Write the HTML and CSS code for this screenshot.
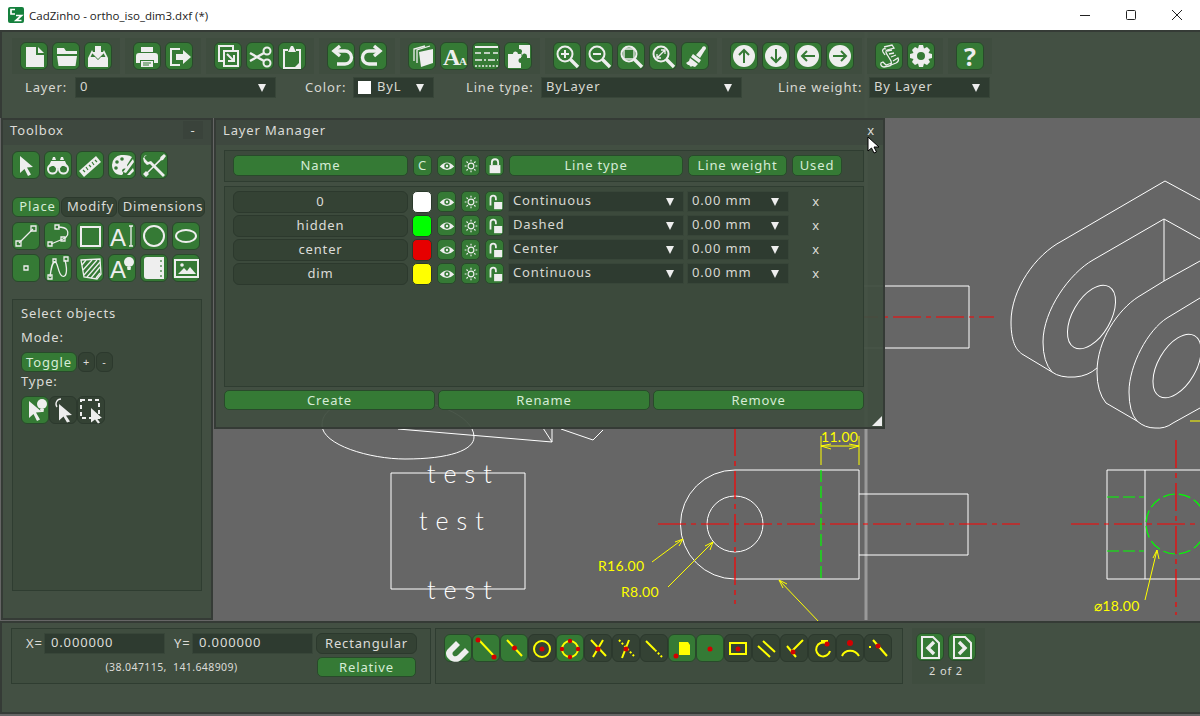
FILE: index.html
```html
<!DOCTYPE html>
<html lang="en">
<head>
<meta charset="utf-8">
<title>CadZinho - ortho_iso_dim3.dxf (*)</title>
<link rel="stylesheet" href="styles.css">
</head>
<body>
<svg class="defs" aria-hidden="true">
  <defs>
    <symbol id="i-new" viewBox="0 0 28 28"><path d="M6 5h10v8h8v12H6z"/><path d="M18 5l6 6h-6z"/></symbol>
    <symbol id="i-open" viewBox="0 0 28 28"><path d="M5 6h7l2 3h11v3H5z"/><path d="M5 14h20l-1.500 10h-17z"/></symbol>
    <symbol id="i-save" viewBox="0 0 28 28"><path d="M11 4h6v6h4l-7 7-7-7h4z"/><path d="M8 8l-4 8v9h20v-9l-4-8-1 2 2.500 5H17l-3 3-3-3H6.500L9 10z"/></symbol>
    <symbol id="i-print" viewBox="0 0 28 28"><path d="M8 5h12v5H8z"/><path d="M6 11h16a3 3 0 0 1 3 3v7h-4v-3H7v3H3v-7a3 3 0 0 1 3-3z"/><path d="M8 19h12v6H8z"/><path d="M10 21h8M10 23h6" class="gs1"/></symbol>
    <symbol id="i-export" viewBox="0 0 28 28"><path d="M15 7H6v16h9" class="ws"/><path d="M11 12h7V8l8 7-8 7v-4h-7z"/></symbol>
    <symbol id="i-copy" viewBox="0 0 28 28"><path d="M19 9V4H5v15h5" class="ws"/><path d="M10 9h14v15H10z" class="ws"/><path d="M13 12l7 7M14 19h6v-6" class="ws"/></symbol>
    <symbol id="i-cut" viewBox="0 0 28 28"><circle cx="21" cy="9" r="3.500" class="ws"/><circle cx="21" cy="21" r="3.500" class="ws"/><path d="M18 11L4 19M18 19L4 11" class="wt2"/></symbol>
    <symbol id="i-paste" viewBox="0 0 28 28"><path d="M10 8H6v18h16V8h-4" class="ws"/><path d="M11 8l2-4h2l2 4 1 2h-8z"/><path d="M22 20v6h-6z"/></symbol>
    <symbol id="i-undo" viewBox="0 0 28 28"><path d="M8 9h10a6.500 6.500 0 0 1 0 13H10" class="wt"/><path d="M13 4L7 9l6 5" class="wt"/></symbol>
    <symbol id="i-redo" viewBox="0 0 28 28"><path d="M20 9H10a6.500 6.500 0 0 0 0 13h8" class="wt"/><path d="M15 4l6 5-6 5" class="wt"/></symbol>
    <symbol id="i-layers" viewBox="0 0 28 28"><path d="M11 10l14-3v14l-12 4z"/><path d="M9 21V8l13-4M6 19V7l11-3" class="ws1"/></symbol>
    <symbol id="i-blocks" viewBox="0 0 28 28"><path d="M4 12h5a2.500 2.500 0 0 1 5 0h3v4a2.500 2.500 0 0 0 0 5v5H4z"/><path d="M15 3h11v13h-3v-2a2.500 2.500 0 0 0-5 0v1h-0.500v-4a2.500 2.500 0 0 0-2.500-4z"/></symbol>
    <symbol id="i-ltypes" viewBox="0 0 28 28"><path d="M3 5h23" class="ws"/><path d="M3 11h23" class="ws d1"/><path d="M3 18h23" class="ws d2"/><path d="M3 24h23" class="ws d3"/></symbol>
    <symbol id="i-zoomin" viewBox="0 0 28 28"><circle cx="12" cy="12" r="7.500" class="ws"/><path d="M17.500 17.500L25 25" class="wt"/><path d="M8 12h8M12 8v8" class="ws"/></symbol>
    <symbol id="i-zoomout" viewBox="0 0 28 28"><circle cx="12" cy="12" r="7.500" class="ws"/><path d="M17.500 17.500L25 25" class="wt"/><path d="M8 12h8" class="ws"/></symbol>
    <symbol id="i-zoomwin" viewBox="0 0 28 28"><circle cx="12" cy="12" r="7.500" class="ws"/><path d="M17.500 17.500L25 25" class="wt"/><path d="M7 7h10v10H7z" class="ws1"/></symbol>
    <symbol id="i-zoomall" viewBox="0 0 28 28"><circle cx="12" cy="12" r="7.500" class="ws"/><path d="M17.500 17.500L25 25" class="wt"/><path d="M8 16l8-8M8 12v4h4M12 8h4v4" class="ws1"/></symbol>
    <symbol id="i-brush" viewBox="0 0 28 28"><path d="M15 13l6-7a2 2 0 1 1 3 2l-5 8z"/><path d="M12 12l8 6-2 3-8-6z"/><path d="M9 16l8 6-3 3-3-1-1 1-2-2-1 0-2-2 3-2z"/></symbol>
    <symbol id="i-up" viewBox="0 0 28 28"><circle cx="14" cy="14" r="11"/><path d="M14 21V8M9 13l5-5 5 5" class="gs"/></symbol>
    <symbol id="i-down" viewBox="0 0 28 28"><circle cx="14" cy="14" r="11"/><path d="M14 7v13M9 15l5 5 5-5" class="gs"/></symbol>
    <symbol id="i-left" viewBox="0 0 28 28"><circle cx="14" cy="14" r="11"/><path d="M21 14H8M13 9l-5 5 5 5" class="gs"/></symbol>
    <symbol id="i-right" viewBox="0 0 28 28"><circle cx="14" cy="14" r="11"/><path d="M7 14h13M15 9l5 5-5 5" class="gs"/></symbol>
    <symbol id="i-script" viewBox="0 0 28 28"><path d="M9 5l8-2 2 3-7 2c-2 1-1 3 1 6l3 5c1 3 0 5-2 5l-5 1c-2 0-4-2-3-4l2-1 3 3 6-2" class="ws1"/><path d="M11 7c-3-1-4 1-3 3l2 3M12 9l5-1M14 12l5-1M16 15l5-2M18 19l5-3c1 2 0 4-2 5l-5 2" class="ws1"/></symbol>
    <symbol id="i-gear" viewBox="0 0 28 28"><path d="M12 3h4l1 3.500 3-1.500 3 3-1.500 3 3.500 1v4l-3.500 1 1.500 3-3 3-3-1.500-1 3.500h-4l-1-3.500-3 1.500-3-3 1.500-3L3 16v-4l3.500-1L5 8l3-3 3 1.500zM14 10a4 4 0 1 0 0 8 4 4 0 0 0 0-8z" fill-rule="evenodd"/></symbol>
    <symbol id="i-pick" viewBox="0 0 28 28"><path d="M8 5l13 11-6 .500 4 7-3 1.500-3.500-7-4.500 4z"/></symbol>
    <symbol id="i-bino" viewBox="0 0 28 28"><circle cx="8.500" cy="18" r="4.500" class="ws"/><circle cx="19.500" cy="18" r="4.500" class="ws"/><path d="M4 17l3-7h14l3 7-4-2h-2l-2 2h-4l-2-2H8z"/><path d="M8 9l1-3h2l1 3zM16 9l1-3h2l1 3z"/></symbol>
    <symbol id="i-ruler" viewBox="0 0 28 28"><path d="M3 20L20 5l5 6-17 15z"/><path d="M7 19l2 2M10 16l2 3M13 14l2 2M16 11l2 3M19 9l2 2" class="gs1"/></symbol>
    <symbol id="i-palette" viewBox="0 0 28 28"><path d="M13 4a10 10 0 0 0-9 10c0 6 4 10 9 10 2 0 3-2 1-4 0-2 2-3 4-2l2-1-1-3 5-8c-3-2-7-2-11-2z"/><circle cx="9" cy="11" r="1.800" class="gf"/><circle cx="14" cy="8" r="1.800" class="gf"/><circle cx="8" cy="17" r="1.800" class="gf"/><path d="M25 8L15 21l3 1 8-11zM25 17l-6 7h3l4-4z"/></symbol>
    <symbol id="i-tools" viewBox="0 0 28 28"><path d="M7 4l-3 1 1 3 3 3 3-1 14 14-2 2L10 13l-3 1-3-3-1-4"/><path d="M24 3l2 2-3 4-2 .500L8 22l1 1-3 3-3-3 3-3 1 1L20 8l.500-2z"/></symbol>
    <symbol id="i-line" viewBox="0 0 28 28"><path d="M7 21L21 7" class="ws1"/><path d="M4 19h5v5H4zM19 4h5v5h-5z" class="ws1"/></symbol>
    <symbol id="i-poly" viewBox="0 0 28 28"><path d="M7 22l12-5c5-2 6-6 4-9-2-3-6-3-9-3" class="ws1"/><path d="M4 20h4v4H4zM17 15h4v4h-4zM11 3h4v4h-4z" class="ws1"/></symbol>
    <symbol id="i-rect" viewBox="0 0 28 28"><path d="M5 5h19v19H5z" class="ws"/></symbol>
    <symbol id="i-circle" viewBox="0 0 28 28"><circle cx="14" cy="14" r="10" class="ws"/></symbol>
    <symbol id="i-ellipse" viewBox="0 0 28 28"><ellipse cx="14" cy="14" rx="10" ry="6" class="ws"/></symbol>
    <symbol id="i-point" viewBox="0 0 28 28"><path d="M12 12h4v4h-4z" class="ws1"/></symbol>
    <symbol id="i-spline" viewBox="0 0 28 28"><path d="M6 23c1-8 2-15 5-15 3 0 3 12 7 14 4 2 6-4 3-16" class="ws1"/><path d="M4 21h4v4H4zM9 5h3v3H9zM20 3h4v4h-4z" class="ws1"/></symbol>
    <symbol id="i-hatch" viewBox="0 0 28 28"><path d="M5 6l19-1 1 15-4 5-13-2z" class="ws1"/><path d="M6 11l4-5M7 16l9-10M8 21L21 6M11 23l13-15M15 24l9-11M20 24l4-5" class="ws1"/></symbol>
    <symbol id="i-book" viewBox="0 0 28 28"><path d="M4 6a3 3 0 0 1 3-3h17v22H7a3 3 0 0 1-3-3z"/><path d="M21 6v2M21 11v2M21 16v2M21 21v2" class="gs1"/></symbol>
    <symbol id="i-image" viewBox="0 0 28 28"><path d="M3 6h23v17H3z" class="ws"/><path d="M6 20l6-6 3 3 3-4 6 7z"/><circle cx="10" cy="11" r="1.800"/></symbol>
    <symbol id="i-bulb" viewBox="0 0 28 28"><circle cx="21" cy="8" r="5"/><path d="M19 13h4l-.500 3h-3z"/></symbol>
    <symbol id="i-lasso" viewBox="0 0 28 28"><path d="M12 3a5 5 0 0 0-4 8" class="ws1"/><path d="M10 8l13 11-6 .500 4 6-3 1-3.500-6-4.500 4z"/></symbol>
    <symbol id="i-boxsel" viewBox="0 0 28 28"><path d="M4 4h18v18H4z" class="ws d4"/><path d="M14 12l11 10-5 .500 3 4-2 1-3-4-4 3z"/></symbol>
    <symbol id="i-eye" viewBox="0 0 20 20"><path d="M2 10.500Q10 1.500 18 10.500 10 18.500 2 10.500z"/><circle cx="10" cy="10" r="3" class="gf"/><circle cx="10" cy="10" r="1.300"/></symbol>
    <symbol id="i-sun" viewBox="0 0 20 20"><circle cx="10" cy="10" r="3.200" class="ws1"/><path d="M10 3v2M10 15v2M3 10h2M15 10h2M5 5l1.500 1.500M13.500 13.500L15 15M5 15l1.500-1.500M13.500 6.500L15 5" class="ws1"/></symbol>
    <symbol id="i-lock" viewBox="0 0 20 20"><path d="M4 9h12v9H4z"/><path d="M6.500 9V6a3.500 3.500 0 0 1 7 0v3" class="ws"/></symbol>
    <symbol id="i-unlock" viewBox="0 0 20 20"><path d="M9 10h9v8H9z"/><path d="M5 14V6a3 3 0 0 1 6 0v2" class="ws"/></symbol>
    <symbol id="i-prev" viewBox="0 0 28 28"><path d="M6 4h11l6 6v15H6z" class="ws"/><path d="M18 9l-6 6 6 6" class="wt"/></symbol>
    <symbol id="i-next" viewBox="0 0 28 28"><path d="M6 4h11l6 6v15H6z" class="ws"/><path d="M11 9l6 6-6 6" class="wt"/></symbol>
    <symbol id="s-magnet" viewBox="0 0 28 28"><path d="M4 15l8-8 4 4-7 7c-2 3 2 6 5 3l7-7 4 4-8 8c-7 6-20-4-13-11z"/></symbol>
    <symbol id="s-end" viewBox="0 0 28 28"><path d="M7 6l15 16" class="ys"/><circle cx="6" cy="6" r="2.500" class="rd"/><circle cx="22" cy="23" r="2.500" class="rd"/></symbol>
    <symbol id="s-mid" viewBox="0 0 28 28"><path d="M7 6l15 16" class="ys"/><circle cx="14.500" cy="14" r="2.500" class="rd"/></symbol>
    <symbol id="s-cen" viewBox="0 0 28 28"><circle cx="14" cy="15" r="8" class="ys"/><circle cx="14" cy="15" r="2.500" class="rd"/></symbol>
    <symbol id="s-quad" viewBox="0 0 28 28"><circle cx="14" cy="15" r="8" class="ys"/><circle cx="14" cy="7" r="2.200" class="rd"/><circle cx="14" cy="23" r="2.200" class="rd"/><circle cx="6" cy="15" r="2.200" class="rd"/><circle cx="22" cy="15" r="2.200" class="rd"/></symbol>
    <symbol id="s-int" viewBox="0 0 28 28"><path d="M7 6l15 16M19 6L9 23" class="ys"/><circle cx="14" cy="15" r="2.500" class="rd"/></symbol>
    <symbol id="s-apint" viewBox="0 0 28 28"><path d="M17 6L10 24" class="ys"/><path d="M7 6l15 16" class="ys dash"/><circle cx="14" cy="15" r="2.500" class="rd"/></symbol>
    <symbol id="s-online" viewBox="0 0 28 28"><path d="M6 7l9 9" class="ys"/><path d="M15 16l7 7" class="ys dash"/></symbol>
    <symbol id="s-free" viewBox="0 0 28 28"><path d="M11 8h9l2 3v10H11z" class="yf"/><circle cx="8" cy="22" r="2.500" class="rd"/></symbol>
    <symbol id="s-dot" viewBox="0 0 28 28"><circle cx="14" cy="15" r="2.500" class="rd"/></symbol>
    <symbol id="s-box" viewBox="0 0 28 28"><path d="M6 9h16v11H6z" class="ys"/><circle cx="14" cy="15" r="2.500" class="rd"/></symbol>
    <symbol id="s-par" viewBox="0 0 28 28"><path d="M6 12l12 11M11 7l12 11" class="ys"/></symbol>
    <symbol id="s-perp" viewBox="0 0 28 28"><path d="M7 12l9 11M12 17L23 6" class="ys"/><circle cx="13" cy="18" r="2.500" class="rd"/></symbol>
    <symbol id="s-tan" viewBox="0 0 28 28"><path d="M18 9a7 7 0 1 0 4 8" class="ys"/><path d="M13 7h6v5" class="ys"/><circle cx="19" cy="10" r="2.500" class="rd"/></symbol>
    <symbol id="s-arc" viewBox="0 0 28 28"><path d="M6 22c3-7 13-7 17 0" class="ys"/><circle cx="14" cy="9" r="3" class="rd"/></symbol>
    <symbol id="s-ext" viewBox="0 0 28 28"><path d="M9 6l14 16" class="ys"/><path d="M5 13h2" class="ys"/><circle cx="14" cy="12" r="2.500" class="rd"/></symbol>
  </defs>
</svg>

<div class="app">
  <svg class="drawing" viewBox="0 0 1200 716" aria-hidden="true">
    <path class="guide" d="M866 32V620"/>
    <g class="wl">
      <path d="M322 425C322 445 370 459 405 459C450 459 474 450 474 437C474 415 430 398 390 398C350 398 322 405 322 425"/>
      <path d="M398 429L552 442L543 428M552 442V428M561 429L593 440L603 430"/>
      <path d="M391 473H525V589H391z"/>
      <path d="M859 470H735A54.500 54.500 0 0 0 735 579H859"/>
      <circle cx="735" cy="524" r="28"/>
      <path d="M859 494H968V555H859M859 470V579"/>
      <path d="M820 286H969V348H820"/>
      <path d="M1107 470H1200M1107 579H1200M1107 470V579M1145 470V579"/>
      <path d="M1200 200L1165 181L1062 241C1035 255 1011 290 1011 322C1011 345 1018 351 1022 354L1052 372Q1060 378 1075 377Q1088 376 1097 368"/>
      <path d="M1200 239L1164 219L1093 260C1070 273 1043 310 1043 342Q1043 362 1052 372M1164 219V281"/>
      <path d="M1200 261L1164 281L1138 297C1118 310 1097 340 1097 372Q1097 392 1106 403L1137 421Q1145 428 1155 428Q1165 429 1173 423L1200 408"/>
      <path d="M1200 298L1167 318C1148 330 1129 365 1129 392Q1129 412 1137 421"/>
      <ellipse class="hole-a" cx="1091.500" cy="317" rx="35" ry="19"/>
      <ellipse class="hole-b" cx="1177" cy="366" rx="35" ry="19"/>
    </g>
    <g class="rl">
      <path d="M658 524H1020M1071 524H1200M850 317H994"/>
      <path d="M735 428V604M1176 440V615"/>
    </g>
    <g class="gl">
      <path d="M821 470V579M1107 497H1144M1107 551H1144"/>
      <circle cx="1176" cy="524" r="30"/>
    </g>
    <g class="yl">
      <path d="M821 436V465M859 436V465M821 446H859M821 446L831 444M821 446L831 449M859 446L849 444M859 446L849 449"/>
      <path d="M652 562L683 539M683 539L675 542M683 539L679 546"/>
      <path d="M668 587L713 542M713 542L705 546M713 542L710 550"/>
      <path d="M820 623L779 580M779 580L783 588M779 580L787 584"/>
      <path d="M1145 600L1157 550M1157 550L1153 558M1157 550L1159 559"/>
      <path d="M1200 421H1190"/>
    </g>
    <text class="cad" x="427" y="483">test</text>
    <text class="cad" x="419" y="530">test</text>
    <text class="cad" x="427" y="599">test</text>
    <text class="dim" x="821" y="442">11.00</text>
    <text class="dim" x="598" y="571">R16.00</text>
    <text class="dim" x="621" y="597">R8.00</text>
    <text class="dim" x="1094" y="611">⌀18.00</text>
  </svg>

  <header class="titlebar">
    <svg class="appicon" viewBox="0 0 16 16" aria-hidden="true"><rect width="16" height="16" rx="2"/><path d="M7 2.500H3V7H7M8 8.500h5.500L8 13.500h5.500"/></svg>
    <span class="apptitle">CadZinho - ortho_iso_dim3.dxf (*)</span>
    <div class="winctl">
      <svg viewBox="0 0 12 12" aria-hidden="true"><path d="M1 6.500H11"/></svg>
      <svg viewBox="0 0 12 12" aria-hidden="true"><rect x="1.500" y="1.500" width="9" height="9" rx="1"/></svg>
      <svg viewBox="0 0 12 12" aria-hidden="true"><path d="M1 1L11 11M11 1L1 11"/></svg>
    </div>
  </header>

  <section class="toolbar">
    <div class="tool-row">
      <div class="tgroup">
        <button class="btn"><svg class="ic"><use href="#i-new"/></svg></button>
        <button class="btn"><svg class="ic"><use href="#i-open"/></svg></button>
        <button class="btn"><svg class="ic"><use href="#i-save"/></svg></button>
      </div>
      <div class="tgroup">
        <button class="btn"><svg class="ic"><use href="#i-print"/></svg></button>
        <button class="btn"><svg class="ic"><use href="#i-export"/></svg></button>
      </div>
      <div class="tgroup">
        <button class="btn"><svg class="ic"><use href="#i-copy"/></svg></button>
        <button class="btn"><svg class="ic"><use href="#i-cut"/></svg></button>
        <button class="btn"><svg class="ic"><use href="#i-paste"/></svg></button>
      </div>
      <div class="tgroup">
        <button class="btn"><svg class="ic"><use href="#i-undo"/></svg></button>
        <button class="btn"><svg class="ic"><use href="#i-redo"/></svg></button>
      </div>
      <div class="tgroup">
        <button class="btn"><svg class="ic"><use href="#i-layers"/></svg></button>
        <button class="btn"><svg class="ic" viewBox="0 0 28 28"><text class="serif-a" x="3" y="23">A</text><text class="serif-b" x="19" y="23">A</text></svg></button>
        <button class="btn"><svg class="ic"><use href="#i-ltypes"/></svg></button>
        <button class="btn"><svg class="ic"><use href="#i-blocks"/></svg></button>
      </div>
      <div class="tgroup">
        <button class="btn"><svg class="ic"><use href="#i-zoomin"/></svg></button>
        <button class="btn"><svg class="ic"><use href="#i-zoomout"/></svg></button>
        <button class="btn"><svg class="ic"><use href="#i-zoomwin"/></svg></button>
        <button class="btn"><svg class="ic"><use href="#i-zoomall"/></svg></button>
        <button class="btn"><svg class="ic"><use href="#i-brush"/></svg></button>
      </div>
      <div class="tgroup">
        <button class="btn"><svg class="ic"><use href="#i-up"/></svg></button>
        <button class="btn"><svg class="ic"><use href="#i-down"/></svg></button>
        <button class="btn"><svg class="ic"><use href="#i-left"/></svg></button>
        <button class="btn"><svg class="ic"><use href="#i-right"/></svg></button>
      </div>
      <div class="tgroup">
        <button class="btn"><svg class="ic"><use href="#i-script"/></svg></button>
        <button class="btn"><svg class="ic"><use href="#i-gear"/></svg></button>
      </div>
      <div class="tgroup">
        <button class="btn help">?</button>
      </div>
    </div>
    <div class="prop-row">
      <span class="lbl">Layer:</span>
      <div class="combo"><span>0</span></div>
      <span class="lbl">Color:</span>
      <div class="combo"><span class="swatch"></span><span>ByL</span></div>
      <span class="lbl">Line type:</span>
      <div class="combo"><span>ByLayer</span></div>
      <span class="lbl">Line weight:</span>
      <div class="combo"><span>By Layer</span></div>
    </div>
  </section>

  <main class="desk">
    <section class="win toolbox">
      <div class="win-title"><span>Toolbox</span><span class="win-min">-</span></div>
      <div class="tb-body">
        <div class="tb-row">
          <button class="btn"><svg class="ic"><use href="#i-pick"/></svg></button>
          <button class="btn"><svg class="ic"><use href="#i-bino"/></svg></button>
          <button class="btn"><svg class="ic"><use href="#i-ruler"/></svg></button>
          <button class="btn"><svg class="ic"><use href="#i-palette"/></svg></button>
          <button class="btn"><svg class="ic"><use href="#i-tools"/></svg></button>
        </div>
        <div class="tabs">
          <span class="tab on t-place">Place</span>
          <span class="tab t-mod">Modify</span>
          <span class="tab t-dim">Dimensions</span>
        </div>
        <div class="tb-grid">
          <button class="btn"><svg class="ic"><use href="#i-line"/></svg></button>
          <button class="btn"><svg class="ic"><use href="#i-poly"/></svg></button>
          <button class="btn"><svg class="ic"><use href="#i-rect"/></svg></button>
          <button class="btn"><svg class="ic" viewBox="0 0 28 28"><text class="sans-a" x="2" y="24">A</text><path class="ws1" d="M21 4h4M23 4v20M21 24h4"/></svg></button>
          <button class="btn"><svg class="ic"><use href="#i-circle"/></svg></button>
          <button class="btn"><svg class="ic"><use href="#i-ellipse"/></svg></button>
          <button class="btn"><svg class="ic"><use href="#i-point"/></svg></button>
          <button class="btn"><svg class="ic"><use href="#i-spline"/></svg></button>
          <button class="btn"><svg class="ic"><use href="#i-hatch"/></svg></button>
          <button class="btn"><svg class="ic" viewBox="0 0 28 28"><text class="sans-a" x="2" y="24">A</text><use href="#i-bulb" width="28" height="28"/></svg></button>
          <button class="btn"><svg class="ic"><use href="#i-book"/></svg></button>
          <button class="btn"><svg class="ic"><use href="#i-image"/></svg></button>
        </div>
        <div class="subpanel">
          <p class="sub-line">Select objects</p>
          <p class="sub-line mode">Mode:</p>
          <div class="mode-row">
            <span class="tab on t-toggle">Toggle</span>
            <span class="tab small">+</span>
            <span class="tab small">-</span>
          </div>
          <p class="sub-line type">Type:</p>
          <div class="type-row">
            <button class="btn"><svg class="ic"><use href="#i-pick"/><use href="#i-bulb"/></svg></button>
            <button class="btn dark"><svg class="ic"><use href="#i-lasso"/></svg></button>
            <button class="btn dark"><svg class="ic"><use href="#i-boxsel"/></svg></button>
          </div>
        </div>
      </div>
    </section>

    <section class="win layers">
      <div class="win-title"><span>Layer Manager</span><span class="win-x">x</span></div>
      <div class="lm-head">
        <span class="hb">Name</span>
        <span class="hb hb-c">C</span>
        <span class="hb"><svg class="ics"><use href="#i-eye"/></svg></span>
        <span class="hb"><svg class="ics"><use href="#i-sun"/></svg></span>
        <span class="hb"><svg class="ics"><use href="#i-lock"/></svg></span>
        <span class="hb">Line type</span>
        <span class="hb">Line weight</span>
        <span class="hb">Used</span>
      </div>
      <div class="lm-list">
        <div class="lm-row">
          <span class="lname">0</span><span class="chip c-white"></span>
          <span class="hb"><svg class="ics"><use href="#i-eye"/></svg></span>
          <span class="hb"><svg class="ics"><use href="#i-sun"/></svg></span>
          <span class="hb"><svg class="ics"><use href="#i-unlock"/></svg></span>
          <div class="combo"><span>Continuous</span></div>
          <div class="combo"><span>0.00 mm</span></div>
          <span class="used">x</span>
        </div>
        <div class="lm-row">
          <span class="lname">hidden</span><span class="chip c-green"></span>
          <span class="hb"><svg class="ics"><use href="#i-eye"/></svg></span>
          <span class="hb"><svg class="ics"><use href="#i-sun"/></svg></span>
          <span class="hb"><svg class="ics"><use href="#i-unlock"/></svg></span>
          <div class="combo"><span>Dashed</span></div>
          <div class="combo"><span>0.00 mm</span></div>
          <span class="used">x</span>
        </div>
        <div class="lm-row">
          <span class="lname">center</span><span class="chip c-red"></span>
          <span class="hb"><svg class="ics"><use href="#i-eye"/></svg></span>
          <span class="hb"><svg class="ics"><use href="#i-sun"/></svg></span>
          <span class="hb"><svg class="ics"><use href="#i-unlock"/></svg></span>
          <div class="combo"><span>Center</span></div>
          <div class="combo"><span>0.00 mm</span></div>
          <span class="used">x</span>
        </div>
        <div class="lm-row">
          <span class="lname">dim</span><span class="chip c-yellow"></span>
          <span class="hb"><svg class="ics"><use href="#i-eye"/></svg></span>
          <span class="hb"><svg class="ics"><use href="#i-sun"/></svg></span>
          <span class="hb"><svg class="ics"><use href="#i-unlock"/></svg></span>
          <div class="combo"><span>Continuous</span></div>
          <div class="combo"><span>0.00 mm</span></div>
          <span class="used">x</span>
        </div>
      </div>
      <div class="lm-actions">
        <span class="act">Create</span>
        <span class="act">Rename</span>
        <span class="act">Remove</span>
      </div>
      <span class="grip"></span>
      <svg class="cursor" viewBox="0 0 13 18" aria-hidden="true"><path d="M1 1V15L4.500 12L7 17L9.500 16L7 11H12z"/></svg>
    </section>
  </main>

  <footer class="statusbar">
    <div class="coords">
      <div class="xy">
        <span class="lbl-xy">X=</span><span class="num">0.000000</span>
        <span class="lbl-xy y">Y=</span><span class="num">0.000000</span>
        <span class="mini">(38.047115,&nbsp; 141.648909)</span>
      </div>
      <div class="modes">
        <span class="tab m-rect">Rectangular</span>
        <span class="act m-rel">Relative</span>
      </div>
    </div>
    <div class="snaps">
      <button class="btn"><svg class="ic"><use href="#s-magnet"/></svg></button>
      <button class="btn"><svg class="ic"><use href="#s-end"/></svg></button>
      <button class="btn"><svg class="ic"><use href="#s-mid"/></svg></button>
      <button class="btn dark"><svg class="ic"><use href="#s-cen"/></svg></button>
      <button class="btn"><svg class="ic"><use href="#s-quad"/></svg></button>
      <button class="btn dark"><svg class="ic"><use href="#s-int"/></svg></button>
      <button class="btn dark"><svg class="ic"><use href="#s-apint"/></svg></button>
      <button class="btn dark"><svg class="ic"><use href="#s-online"/></svg></button>
      <button class="btn"><svg class="ic"><use href="#s-free"/></svg></button>
      <button class="btn"><svg class="ic"><use href="#s-dot"/></svg></button>
      <button class="btn dark"><svg class="ic"><use href="#s-box"/></svg></button>
      <button class="btn dark"><svg class="ic"><use href="#s-par"/></svg></button>
      <button class="btn dark"><svg class="ic"><use href="#s-perp"/></svg></button>
      <button class="btn dark"><svg class="ic"><use href="#s-tan"/></svg></button>
      <button class="btn dark"><svg class="ic"><use href="#s-arc"/></svg></button>
      <button class="btn dark"><svg class="ic"><use href="#s-ext"/></svg></button>
    </div>
    <div class="pager">
      <div class="pager-btns">
        <button class="btn"><svg class="ic"><use href="#i-prev"/></svg></button>
        <button class="btn"><svg class="ic"><use href="#i-next"/></svg></button>
      </div>
      <span class="pager-txt">2 of 2</span>
    </div>
  </footer>
</div>
</body>
</html>
```

FILE: styles.css
```css
* { box-sizing: border-box; }
html, body { margin: 0; padding: 0; height: 100%; overflow: hidden; }
body {
  font-family: "Noto Sans", sans-serif;
  font-size: 13px;
  letter-spacing: 0.85px;
  color: #dcdcd8;
  background: #fff;
}
.defs { position: absolute; width: 0; height: 0; }

/* shared icon paint classes */
.ws { fill: none; stroke: #eee; stroke-width: 2; }
.ws1 { fill: none; stroke: #eee; stroke-width: 1.3; }
.wt { fill: none; stroke: #eee; stroke-width: 3.4; }
.wt2 { fill: none; stroke: #eee; stroke-width: 2.4; }
.gs { fill: none; stroke: #357a35; stroke-width: 2; }
.gs1 { fill: none; stroke: #357a35; stroke-width: 1.2; }
.gf { fill: #357a35; }
.d1 { stroke-dasharray: 6 3; stroke-width: 1.6; }
.d2 { stroke-dasharray: 7 2 2 2; stroke-width: 1.6; }
.d3 { stroke-dasharray: 2 1.500; stroke-width: 1.6; }
.d4 { stroke-dasharray: 4 3; }
.ys { fill: none; stroke: #ff0; stroke-width: 2; }
.yf { fill: #ff0; }
.dash { stroke-dasharray: 2 2; }
.rd { fill: #d40000; }
.serif-a { font: bold 24px "Liberation Serif", serif; fill: #eee; letter-spacing: 0; }
.serif-b { font: bold 11px "Liberation Serif", serif; fill: #eee; letter-spacing: 0; }
.sans-a { font: 24px "Liberation Sans", sans-serif; fill: #eee; letter-spacing: 0; }

.app {
  position: relative;
  width: 1200px;
  height: 716px;
  display: flex;
  flex-direction: column;
  background: #666;
  overflow: hidden;
}
.drawing { position: absolute; left: 0; top: 0; width: 1200px; height: 716px; }
.guide { stroke: #9a9a9a; stroke-width: 3; fill: none; }
.wl path, .wl circle, .wl ellipse { fill: none; stroke: #fff; stroke-width: 1; }
.hole-a { transform: rotate(-60deg); transform-origin: 1091.5px 317px; }
.hole-b { transform: rotate(-60deg); transform-origin: 1177px 366px; }
.rl path { fill: none; stroke: #f00; stroke-width: 1.2; stroke-dasharray: 28 5 5 5; }
.gl path, .gl circle { fill: none; stroke: #0f0; stroke-width: 1.2; stroke-dasharray: 12 4; }
.yl path { fill: none; stroke: #ff0; stroke-width: 1; }
.cad {
  font-family: "Lato", sans-serif;
  font-weight: 300;
  font-size: 25px;
  letter-spacing: 8px;
  fill: #fff;
}
.dim { font-family: "Lato", sans-serif; font-weight: 400; font-size: 14px; letter-spacing: 0.3px; fill: #ff0; }

/* title bar */
.titlebar {
  position: relative;
  height: 30px;
  flex: none;
  display: flex;
  align-items: center;
  padding-left: 8px;
  background: #fff;
  color: #1c1c1c;
  font-family: "Open Sans", sans-serif;
  font-size: 11.5px;
  letter-spacing: 0;
}
.appicon { width: 16px; height: 16px; margin-right: 5px; }
.appicon rect { fill: #15803d; }
.appicon path { fill: none; stroke: #fff; stroke-width: 1.700; }
.winctl { margin-left: auto; display: flex; align-items: center; gap: 34px; padding-right: 17px; }
.winctl svg { width: 12px; height: 12px; }
.winctl path, .winctl rect { fill: none; stroke: #222; stroke-width: 1; }

/* shared controls */
.btn {
  width: 28px;
  height: 28px;
  flex: none;
  padding: 0;
  border: 1px solid #294a2b;
  border-radius: 6px;
  background: #357a35;
  display: flex;
  align-items: center;
  justify-content: center;
  color: #eee;
  font-family: inherit;
}
.btn.dark { background: #344234; border-color: #2c392d; }
.ic { width: 28px; height: 28px; fill: #eee; margin: -1px; flex: none; }
.help { font: bold 25px "Open Sans", sans-serif; line-height: 1; letter-spacing: 0; }
.lbl { color: #d8d8d2; padding-bottom: 2px; }
.combo {
  position: relative;
  height: 21px;
  background: #2e3b30;
  border: 1px solid #384639;
  display: flex;
  align-items: center;
  gap: 6px;
  padding: 0 0 3px 4px;
  color: #d8d8d2;
}
.combo::after {
  content: "";
  position: absolute;
  right: 9px;
  top: 6px;
  border-left: 4px solid transparent;
  border-right: 4px solid transparent;
  border-top: 8px solid #eee;
}
.swatch { width: 13px; height: 13px; background: #fff; margin: 3px 0 0 0; }
.tab {
  height: 20px;
  display: flex;
  align-items: center;
  justify-content: center;
  padding-bottom: 2px;
  background: #344234;
  border: 1px solid #2c392d;
  border-radius: 6px;
  color: #dcdcd8;
}
.tab.on { background: #357a35; border-color: #294a2b; color: #d6ecd6; }

/* top toolbar */
.toolbar {
  position: relative;
  height: 88px;
  flex: none;
  background: rgba(66, 80, 66, 0.97);
  border-top: 2px solid #353b36;
  border-left: 2px solid #353b36;
  padding: 6px 0 0 10px;
}
.tool-row { display: flex; gap: 5px; }
.tgroup {
  display: flex;
  gap: 4px;
  padding: 4px 8px;
  background: #3f4d3f;
}
.prop-row {
  display: grid;
  grid-template-columns: 50px 201px 29px 48px 81px 32px 75px 201px 36px 91px 121px;
  align-items: center;
  margin: 3px 0 0 13px;
}
.prop-row > :nth-child(3) { grid-column: 4; }
.prop-row > :nth-child(4) { grid-column: 5; }
.prop-row > :nth-child(5) { grid-column: 7; }
.prop-row > :nth-child(6) { grid-column: 8; }
.prop-row > :nth-child(7) { grid-column: 10; }
.prop-row > :nth-child(8) { grid-column: 11; }

/* desktop and windows */
.desk { position: relative; flex: 1; }
.win {
  position: absolute;
  background: rgba(64, 78, 64, 0.95);
  border: 2px solid #353b36;
}
.win-title {
  height: 25px;
  background: #3e483f;
  display: flex;
  align-items: center;
  justify-content: space-between;
  padding: 0 6px 5px 7px;
}
.toolbox { left: 1px; top: 0; width: 212px; height: 502px; }
.layers { left: 214px; top: 0; width: 671px; height: 311px; }
.win-min { width: 20px; text-align: center; background: #3a433b; margin-right: 2px; }
.win-x { margin-right: 2px; }

.tb-body { padding: 6px 0 0 9px; }
.tb-row { display: flex; gap: 4px; }
.tabs { display: flex; gap: 1px; margin-top: 18px; }
.tabs .tab { padding-left: 3px; }
.t-place { width: 48px; }
.t-mod { width: 56px; }
.t-dim { width: 87px; }
.tb-grid { display: grid; grid-template-columns: repeat(6, 28px); gap: 4px; margin-top: 5px; }
.subpanel {
  width: 190px;
  height: 292px;
  margin-top: 17px;
  border: 1px solid #2f3d31;
  background: #3c4a3c;
  padding: 4px 0 0 8px;
}
.sub-line { margin: 0; line-height: 18px; }
.mode { margin-top: 6px; }
.mode-row { display: flex; gap: 1px; margin-top: 6px; }
.t-toggle { width: 56px; padding-bottom: 1px; }
.small { width: 17px; font-size: 11px; }
.type-row { display: flex; margin-top: 6px; }

/* layer manager */
.lm-head, .lm-list {
  margin: 0 19px 0 8px;
  border: 1px solid #2f3d31;
  background: #3c4a3c;
}
.lm-head {
  height: 32px;
  margin-top: 5px;
  padding: 4px 0 0 8px;
  display: grid;
  grid-template-columns: 175px 19px 19px 19px 19px 174px 99px 50px;
  gap: 5px;
}
.hb {
  height: 21px;
  display: flex;
  align-items: center;
  justify-content: center;
  padding-bottom: 1px;
  background: #357a35;
  border: 1px solid #294a2b;
  border-radius: 5px;
  color: #d6ecd6;
}
.hb:has(.ics) { padding-bottom: 0; }
.ics { width: 18px; height: 18px; fill: #eee; flex: none; }
.lm-list { height: 201px; margin-top: 4px; padding: 4px 0 0 8px; display: flex; flex-direction: column; gap: 3px; }
.lm-row {
  display: grid;
  grid-template-columns: 175px 19px 19px 19px 19px 175px 100px 58px;
  column-gap: 5px;
  height: 21px;
}
.lm-row > .combo { margin-left: -1px; }
.lm-row > .combo + .combo { margin-left: -2px; }
.lname {
  display: flex;
  align-items: center;
  justify-content: center;
  padding-bottom: 2px;
  background: #344234;
  border: 1px solid #2c392d;
  border-radius: 6px;
}
.chip { border-radius: 5px; border: 1px solid #2a3a2b; margin-left: -1px; width: 20px; }
.c-white { background: #fff; }
.c-green { background: #0f0; }
.c-red { background: #e60000; }
.c-yellow { background: #ff0; }
.used { display: flex; align-items: center; justify-content: center; margin-left: -14px; padding-bottom: 2px; }
.lm-actions {
  margin: 3px 19px 0 8px;
  display: grid;
  grid-template-columns: 211px 212px 211px;
  gap: 3px;
}
.act {
  height: 20px;
  display: flex;
  align-items: center;
  justify-content: center;
  padding-bottom: 1px;
  background: #357a35;
  border: 1px solid #294a2b;
  border-radius: 5px;
  color: #d6ecd6;
}
.grip {
  position: absolute;
  right: 1px;
  bottom: 1px;
  width: 0;
  height: 0;
  border-left: 10px solid transparent;
  border-bottom: 10px solid #eee;
}
.cursor { position: absolute; left: 651px; top: 16px; width: 13px; height: 18px; fill: #fff; stroke: #000; stroke-width: 1; }

/* bottom status bar */
.statusbar {
  position: relative;
  height: 93px;
  flex: none;
  margin-bottom: 2px;
  background: rgba(66, 80, 66, 0.97);
  border-top: 2px solid #353b36;
  border-bottom: 2px solid #353b36;
  border-left: 2px solid #353b36;
  padding: 5px 0 0 9px;
  display: flex;
  align-items: flex-start;
}
.coords, .snaps {
  height: 56px;
  border: 1px solid #2f3d31;
  background: #3f4d3f;
}
.coords { width: 420px; display: flex; padding: 4px 0 0 14px; }
.xy {
  width: 290px;
  display: grid;
  grid-template-columns: 18px 121px 27px 121px;
  grid-auto-rows: 21px;
  row-gap: 3px;
  align-items: center;
}
.lbl-xy { padding-bottom: 2px; }
.lbl-xy.y { padding-left: 9px; }
.num {
  height: 21px;
  display: flex;
  align-items: center;
  padding: 0 0 3px 6px;
  background: #2e3b30;
  border: 1px solid #384639;
}
.mini { grid-column: 1 / -1; text-align: center; font-size: 10.5px; letter-spacing: 0.4px; padding: 0 0 2px 4px; }
.modes { display: flex; flex-direction: column; gap: 3px; }
.m-rect { width: 101px; height: 21px; }
.m-rel { width: 99px; margin-left: 1px; height: 20px; }
.snaps { width: 468px; margin-left: 4px; display: flex; padding: 5px 0 0 8px; }
.pager {
  width: 73px;
  height: 56px;
  margin-left: 9px;
  background: #3f4d3f;
  display: flex;
  flex-direction: column;
  padding: 5px 0 0 4px;
}
.pager-btns { display: flex; gap: 4px; }
.pager-txt { font-size: 11px; margin-top: 2px; text-align: center; width: 60px; }
```
